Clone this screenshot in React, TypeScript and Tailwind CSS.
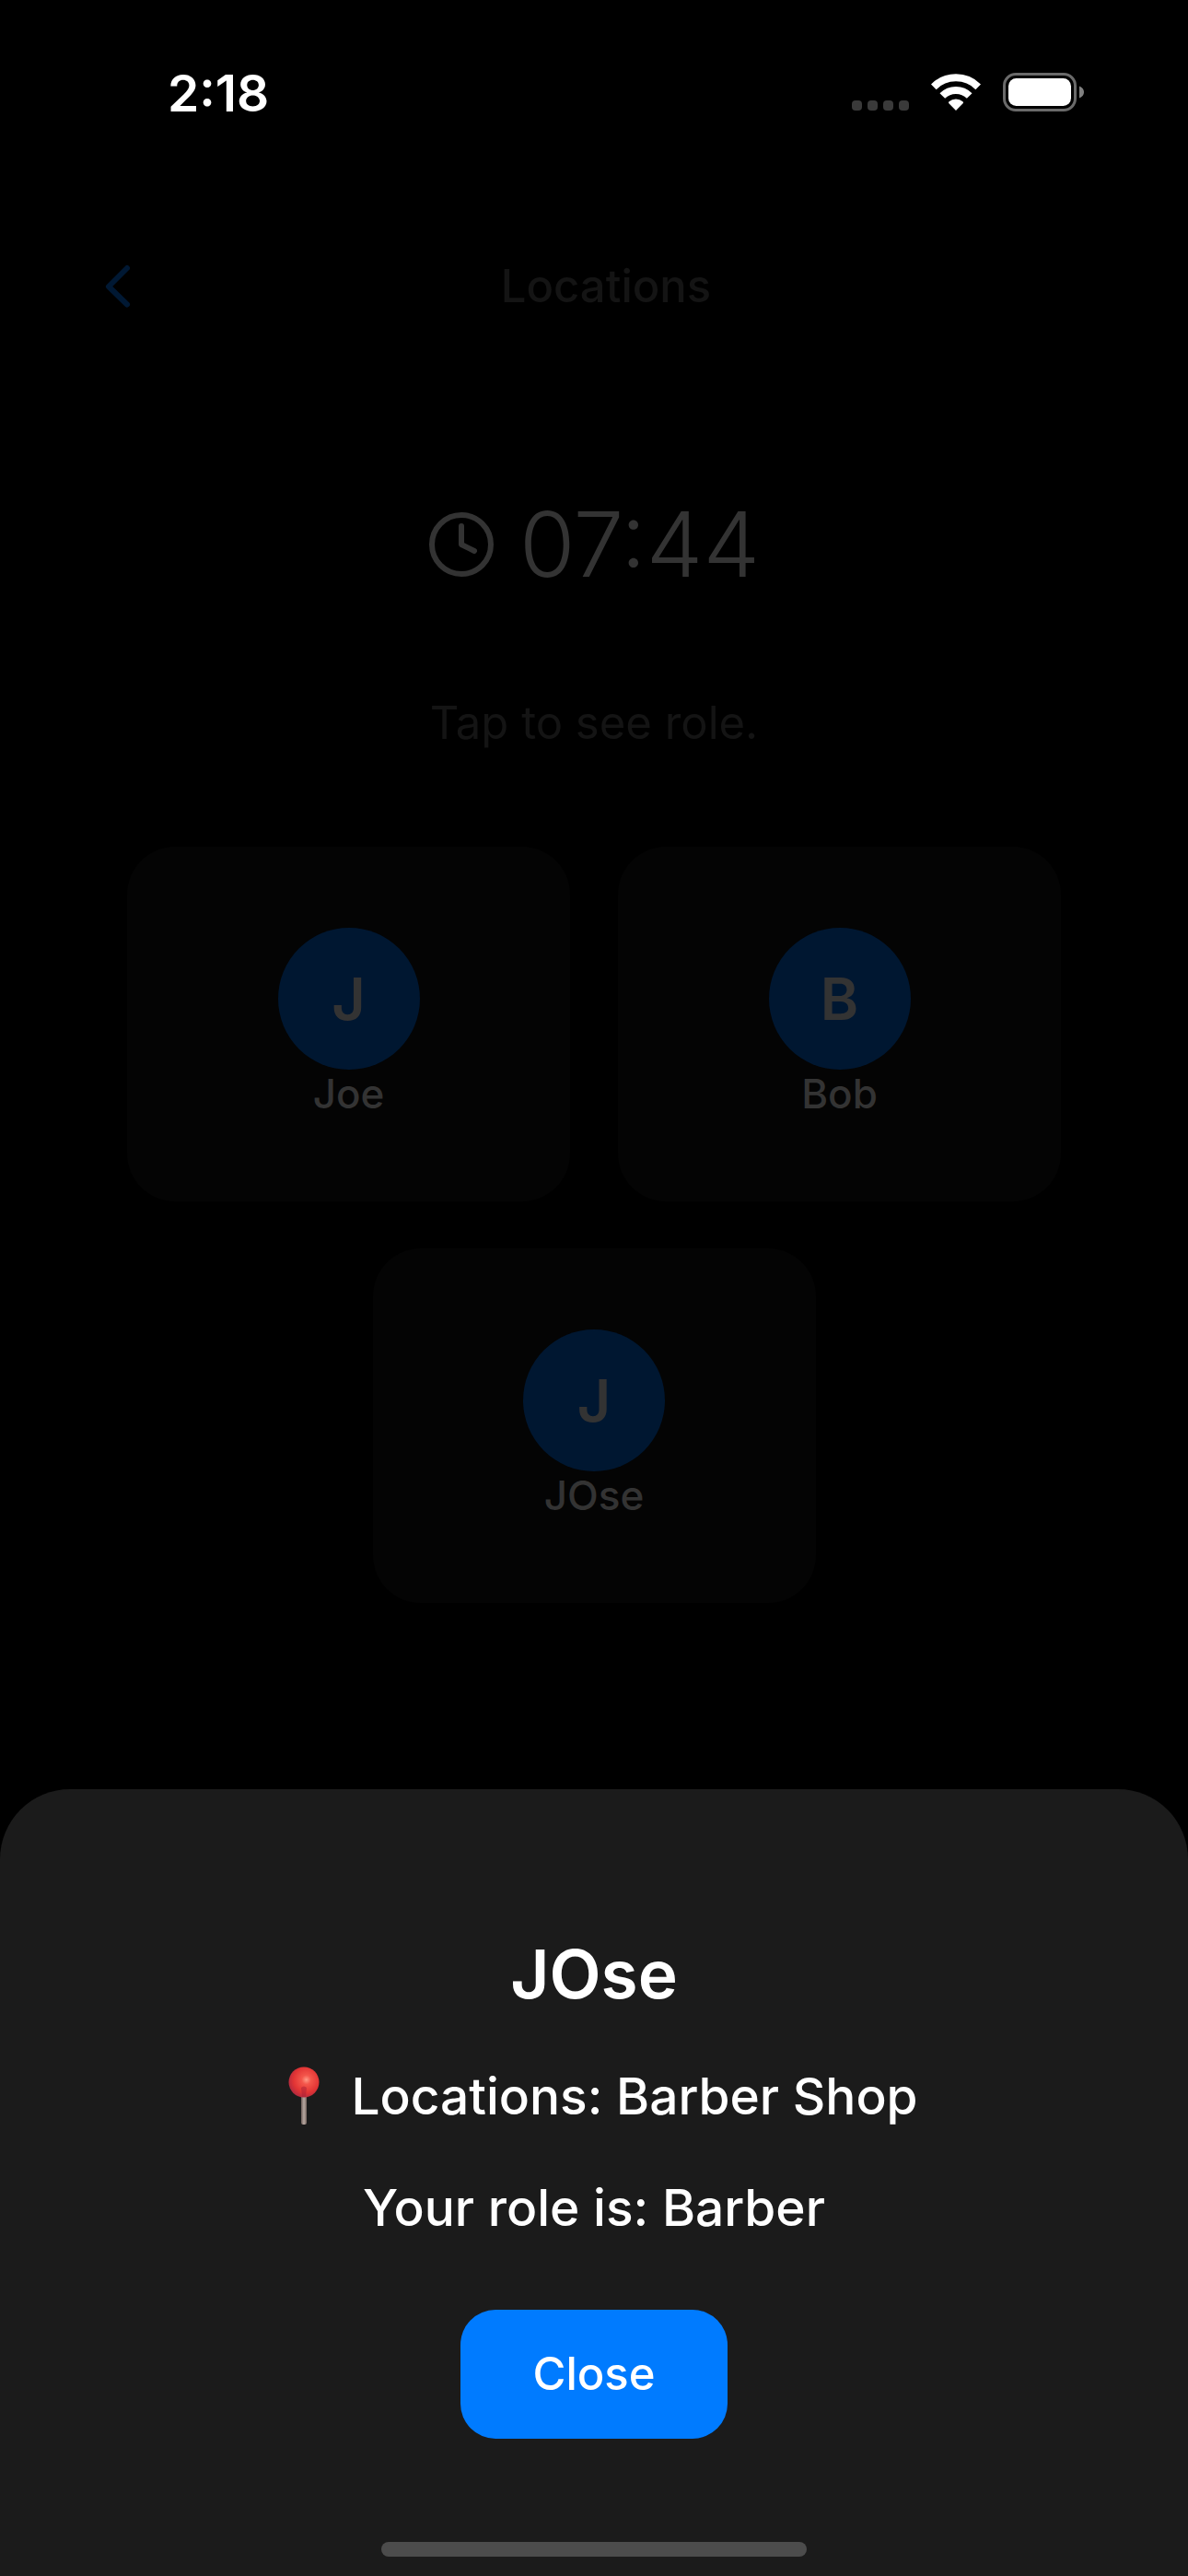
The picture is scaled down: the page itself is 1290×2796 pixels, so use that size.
const players = ["Joe", "Bob", "JOse"];

function StatusBar() {
  return (
    <div className="flex h-[200px] items-start justify-between pt-[69px] pr-[113px] pl-[182px]">
      <span className="text-[55px] leading-[64px] font-semibold text-white">2:18</span>
      <div className="flex pt-[9px]">
        <svg className="mr-[23px] h-[44px] w-[64px]" viewBox="0 0 64 44" fill="#3a3a3a" aria-hidden="true">
          <rect x="1" y="31" width="11" height="11" rx="4" />
          <rect x="18" y="31" width="11" height="11" rx="4" />
          <rect x="35" y="31" width="11" height="11" rx="4" />
          <rect x="52" y="31" width="11" height="11" rx="4" />
        </svg>
        <svg className="mr-[24px] h-[44px] w-[54px]" viewBox="0 0 54 44" aria-hidden="true">
          <g fill="none" stroke="#fff" strokeWidth="8">
            <path d="M2.8 16.3A34.4 34.4 0 0 1 51.2 16.3" />
            <path d="M12.3 26A20.8 20.8 0 0 1 41.7 26" />
          </g>
          <path d="M27 42l-7.6-7.8q-1-1 .1-2a11.4 11.4 0 0 1 15 0q1.1 1 .1 2z" fill="#fff" />
        </svg>
        <svg className="h-[44px] w-[88px]" viewBox="0 0 88 44" aria-hidden="true">
          <rect x="1.5" y="2.5" width="77" height="39" rx="12.5" fill="none" stroke="#6a6a6a" strokeWidth="3" />
          <rect x="6" y="7" width="68" height="30" rx="8.5" fill="#fff" />
          <path d="M83 15.5c3.5 1.5 5 3.6 5 6.500s-1.5 5-5 6.500z" fill="#808080" />
        </svg>
      </div>
    </div>
  );
}

function PlayerCard({ name }: { name: string }) {
  return (
    <button className="flex h-[385px] w-[481px] flex-col items-center rounded-[52px] bg-[#040404] pt-[88px] text-[#333333]">
      <span className="flex size-[154px] items-center justify-center rounded-full bg-[#001731] text-[63px] leading-[76px] font-semibold">
        {name[0]}
      </span>
      <span className="text-[44px] leading-[52px] font-medium">{name}</span>
    </button>
  );
}

function Pushpin() {
  return (
    <svg className="h-[64px] w-[74px]" viewBox="0 0 74 64" role="img" aria-label="Location">
      <defs>
        <radialGradient id="pinHead" cx="0.58" cy="0.42" r="0.6">
          <stop offset="0" stopColor="#ff9a86" />
          <stop offset="0.25" stopColor="#f4564b" />
          <stop offset="0.7" stopColor="#e23434" />
          <stop offset="1" stopColor="#b52a3e" />
        </radialGradient>
        <linearGradient id="pinNeedle">
          <stop offset="0" stopColor="#6e5f5a" />
          <stop offset="0.5" stopColor="#b8a9a2" />
          <stop offset="1" stopColor="#75655f" />
        </linearGradient>
      </defs>
      <rect x="34" y="29" width="6" height="34" rx="2" fill="url(#pinNeedle)" />
      <circle cx="37" cy="17" r="16.5" fill="url(#pinHead)" />
      <path d="M34 23q3-3 6 0l-1 10h-4z" fill="#a81f35" opacity="0.5" />
    </svg>
  );
}

export default function App() {
  return (
    <div className="flex min-h-screen flex-col bg-black font-['Inter',sans-serif]">
      <StatusBar />

      <header className="grid grid-cols-[1fr_auto_1fr] items-center pt-[79px] pr-[86px] pl-[112px]">
        <button aria-label="Back" className="w-[32px]">
          <svg className="h-[52px] w-[32px]" viewBox="0 0 32 52" fill="none" stroke="#001833" strokeWidth="6" strokeLinecap="round" strokeLinejoin="round">
            <path d="M26 6L6 26l20 19.500" />
          </svg>
        </button>
        <h1 className="text-[49px] leading-[64px] font-medium text-[#141414]">Locations</h1>
      </header>

      <main className="flex flex-col items-center px-[48px]">
        <div className="mt-[188px] flex items-center gap-[27px] text-[#333333]">
          <svg className="size-[72px]" viewBox="0 0 72 72" fill="none" stroke="currentColor" strokeWidth="6" strokeLinecap="round" strokeLinejoin="round" aria-hidden="true">
            <circle cx="36" cy="36" r="32" />
            <path d="M36 16v20l14 7" />
          </svg>
          <span className="text-[98px] leading-[120px] font-light">07:44</span>
        </div>
        <p className="mt-[102px] text-[49px] leading-[64px] text-[#141414]">Tap to see role.</p>
        <div className="mt-[102px] flex flex-wrap justify-center gap-x-[52px] gap-y-[51px]">
          {players.map((name) => (
            <PlayerCard key={name} name={name} />
          ))}
        </div>
      </main>

      <section role="dialog" aria-labelledby="sheet-title" className="mt-auto flex flex-col items-center rounded-t-[76px] bg-[#1b1b1b] pt-[156px] text-white">
        <h2 id="sheet-title" className="text-[73px] leading-[90px] font-semibold">JOse</h2>
        <p className="mt-[51px] flex items-center gap-[14px] text-[55px] leading-[72px] font-medium">
          <Pushpin />
          Locations: Barber Shop
        </p>
        <p className="mt-[49px] text-[55px] leading-[72px] font-medium">Your role is: Barber</p>
        <button className="mt-[75px] rounded-[38px] bg-[#007bff] px-[78px] py-[38px] text-[49px] leading-[64px] font-medium">Close</button>
        <div className="mt-[112px] mb-[21px] h-[16px] w-[462px] rounded-full bg-[#4c4c4c]" />
      </section>
    </div>
  );
}
